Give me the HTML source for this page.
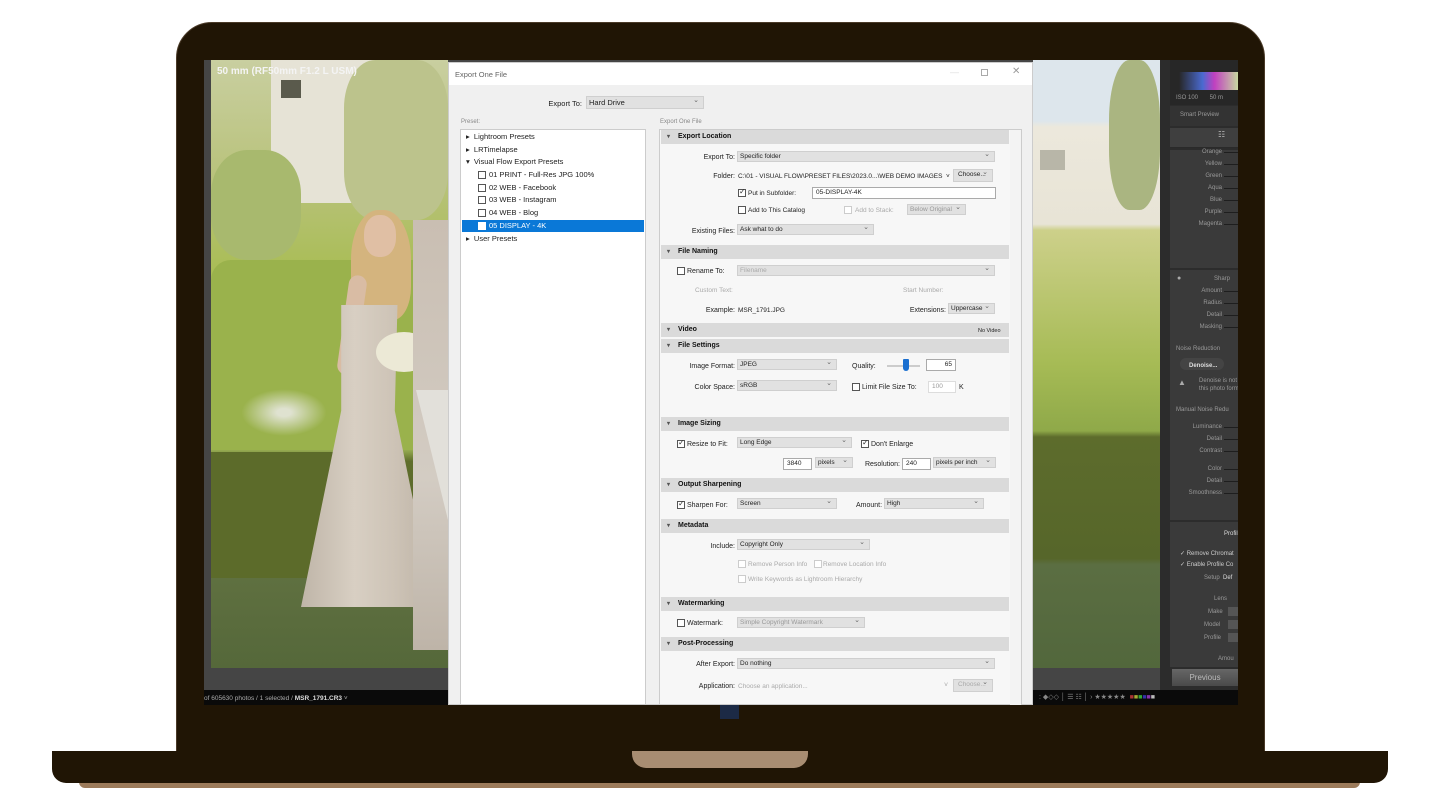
<!DOCTYPE html>
<html><head><meta charset="utf-8">
<style>
*{margin:0;padding:0;box-sizing:border-box}
body{width:1440px;height:810px;background:#fff;position:relative;overflow:hidden;font-family:"Liberation Sans",Arial,sans-serif}
.a{position:absolute}
.lid{left:176px;top:22px;width:1089px;height:740px;background:#201505;border-radius:36px 36px 0 0;border:1px solid #4a3a28}
.base{left:52px;top:751px;width:1336px;height:32px;background:#201505;border-radius:0 0 14px 14px}
.shadow{left:79px;top:780px;width:1281px;height:8px;background:#9c7b5b;border-radius:0 0 6px 6px}
.notch{left:632px;top:751px;width:176px;height:17px;background:#a88d72;border-radius:0 0 14px 14px}
.screen{left:204px;top:60px;width:1034px;height:645px;background:#454545;overflow:hidden}
.t{position:absolute;font-size:7px;color:#222;white-space:nowrap;line-height:9px}
.lbl{position:absolute;font-size:7px;color:#222;white-space:nowrap;text-align:right;line-height:9px}
.dd{position:absolute;height:11px;background:#e1e1e1;border:1px solid #cfcfcf;font-size:6.5px;line-height:9px;padding-left:2px;color:#222}
.dd:after{content:"⌄";position:absolute;right:4px;top:-2px;font-size:7px;color:#666}
.in{position:absolute;height:12px;background:#fff;border:1px solid #aaa;font-size:6.5px;line-height:10px;padding-left:3px;color:#222}
.cb{position:absolute;width:8px;height:8px;border:1px solid #555;background:#fff}
.ck:after{content:"✓";position:absolute;left:0;top:-3px;font-size:8px;color:#333}
.hd{position:absolute;left:661px;width:348px;height:14px;background:#dadada;font-size:7px;font-weight:bold;line-height:14px;padding-left:17px;color:#111}
.hd:before{content:"▾";position:absolute;left:6px;font-size:6px;color:#555}
.dis{color:#aaa}
.lr{position:absolute;font-size:6px;color:#999;white-space:nowrap;text-align:right;line-height:8px}
.sl{position:absolute;left:1020px;width:14px;height:1px;background:#1e1e1e}
</style></head><body>
<div class="a lid"></div>
<div class="a shadow"></div>
<div class="a base"></div>
<div class="a notch"></div>

<div class="a screen">
  <!-- left photo -->
  <div class="a" style="left:7px;top:0;width:237px;height:608px;background:linear-gradient(#c9cfa0 0%,#b8c27a 20%,#a9bd55 35%,#8ba33f 50%,#9ab054 64%,#5f6e2c 66%,#56652a 84%,#5f7040 85%,#55683a 100%)"></div>
  <div class="a" style="left:67px;top:0;width:110px;height:143px;background:#e6e3d6"></div>
  <div class="a" style="left:77px;top:20px;width:20px;height:18px;background:#5a5a4c"></div>
  <div class="a" style="left:7px;top:90px;width:90px;height:110px;background:#a8b96e;border-radius:40%"></div>
  <div class="a" style="left:140px;top:0;width:104px;height:160px;background:#bcc38c;border-radius:30%"></div>
  <div class="a" style="left:7px;top:200px;width:237px;height:190px;background:#9ab24c;border-radius:20px 20px 0 0"></div>
  <div class="a" style="left:7px;top:392px;width:150px;height:126px;background:#5c6b2a"></div>
  <div class="a" style="left:30px;top:325px;width:100px;height:55px;background:radial-gradient(#dfe2d0 10%,transparent 60%)"></div>
  <!-- woman -->
  <div class="a" style="left:147px;top:150px;width:60px;height:110px;background:#d4b47e;border-radius:45% 45% 30% 30%"></div>
  <div class="a" style="left:160px;top:155px;width:32px;height:42px;background:#e0bfa4;border-radius:45%"></div>
  <div class="a" style="left:139px;top:215px;width:18px;height:100px;background:#d9bca4;border-radius:10px;transform:rotate(8deg)"></div>
  <div class="a" style="left:97px;top:245px;width:134px;height:302px;background:linear-gradient(90deg,#bfb5a8,#d8cfc3 40%,#cdc3b6 70%,#bcb2a5);clip-path:polygon(30% 0,72% 0,70% 35%,100% 100%,0 100%,30% 35%)"></div>
  <div class="a" style="left:172px;top:272px;width:56px;height:40px;background:#ece9d6;border-radius:50%"></div>
  <div class="a" style="left:209px;top:160px;width:35px;height:430px;background:linear-gradient(#c9beb2,#d3ccc3 60%,#beb4a8)"></div>
  <div class="a" style="left:212px;top:330px;width:32px;height:130px;background:#e2e0da;clip-path:polygon(0 0,100% 0,100% 100%)"></div>
  <div class="t" style="left:13px;top:6px;color:#f4f4f4;font-size:10px;font-weight:bold;line-height:12px">50 mm (RF50mm F1.2 L USM)</div>

  <!-- right photo -->
  <div class="a" style="left:829px;top:0;width:127px;height:608px;background:linear-gradient(#dde6ec 0%,#dde6ec 10%,#ece8dc 11%,#e8e4d6 27%,#cdd08a 28%,#a6bb55 50%,#8fa949 61%,#5d6c2c 62%,#56662a 82%,#5b6e42 83%,#52673c 100%)"></div>
  <div class="a" style="left:905px;top:0;width:51px;height:150px;background:#aab581;border-radius:40%"></div>
  <div class="a" style="left:836px;top:90px;width:25px;height:20px;background:#b8b6a8"></div>

  <!-- lightroom right panel -->
  <div class="a" style="left:956px;top:0;width:78px;height:645px;background:#2c2c2c"></div>
  <div class="a" style="left:966px;top:0;width:68px;height:45px;background:#272727"></div>
  <div class="a" style="left:975px;top:12px;width:59px;height:18px;background:linear-gradient(90deg,transparent,#4a6ad0 40%,#c040c0 60%,#c8d8a0)"></div>
  <div class="a" style="left:966px;top:46px;width:68px;height:20px;background:#333"></div>
  <div class="a" style="left:966px;top:68px;width:68px;height:20px;background:#3f3f3f;border-bottom:1px solid #2a2a2a"></div>
  <div class="t" style="left:1014px;top:70px;color:#bbb;font-size:8px">☷</div>
  <div class="a" style="left:966px;top:90px;width:68px;height:118px;background:#3a3a3a"></div>
  <div class="a" style="left:966px;top:210px;width:68px;height:250px;background:#3a3a3a"></div>
  <div class="a" style="left:966px;top:462px;width:68px;height:145px;background:#3a3a3a"></div>
  <div class="lr" style="left:972px;top:34px">ISO 100 &nbsp; &nbsp; &nbsp; 50 m</div>
  <div class="lr" style="left:976px;top:51px">Smart Preview</div>
  <div class="lr" style="left:956px;top:88px;width:62px">Orange</div><div class="sl" style="top:92px"></div>
  <div class="lr" style="left:956px;top:100px;width:62px">Yellow</div><div class="sl" style="top:104px"></div>
  <div class="lr" style="left:956px;top:112px;width:62px">Green</div><div class="sl" style="top:116px"></div>
  <div class="lr" style="left:956px;top:124px;width:62px">Aqua</div><div class="sl" style="top:128px"></div>
  <div class="lr" style="left:956px;top:136px;width:62px">Blue</div><div class="sl" style="top:140px"></div>
  <div class="lr" style="left:956px;top:148px;width:62px">Purple</div><div class="sl" style="top:152px"></div>
  <div class="lr" style="left:956px;top:160px;width:62px">Magenta</div><div class="sl" style="top:164px"></div>
  <div class="lr" style="left:1010px;top:215px">Sharp</div>
  <div class="t" style="left:973px;top:214px;color:#aaa;font-size:7px">●</div>
  <div class="lr" style="left:956px;top:227px;width:62px">Amount</div><div class="sl" style="top:231px"></div>
  <div class="lr" style="left:956px;top:239px;width:62px">Radius</div><div class="sl" style="top:243px"></div>
  <div class="lr" style="left:956px;top:251px;width:62px">Detail</div><div class="sl" style="top:255px"></div>
  <div class="lr" style="left:956px;top:263px;width:62px">Masking</div><div class="sl" style="top:267px"></div>
  <div class="lr" style="left:972px;top:285px">Noise Reduction</div>
  <div class="a" style="left:976px;top:298px;width:44px;height:12px;background:#444;border-radius:6px"></div>
  <div class="lr" style="left:985px;top:302px;color:#ddd;font-weight:bold">Denoise...</div>
  <div class="t" style="left:974px;top:318px;color:#aaa;font-size:8px">▲</div>
  <div class="lr" style="left:995px;top:317px">Denoise is not</div>
  <div class="lr" style="left:995px;top:325px">this photo form</div>
  <div class="lr" style="left:972px;top:346px">Manual Noise Redu</div>
  <div class="lr" style="left:956px;top:363px;width:62px">Luminance</div><div class="sl" style="top:367px"></div>
  <div class="lr" style="left:956px;top:375px;width:62px">Detail</div><div class="sl" style="top:379px"></div>
  <div class="lr" style="left:956px;top:387px;width:62px">Contrast</div><div class="sl" style="top:391px"></div>
  <div class="lr" style="left:956px;top:405px;width:62px">Color</div><div class="sl" style="top:409px"></div>
  <div class="lr" style="left:956px;top:417px;width:62px">Detail</div><div class="sl" style="top:421px"></div>
  <div class="lr" style="left:956px;top:429px;width:62px">Smoothness</div><div class="sl" style="top:433px"></div>
  <div class="lr" style="left:1020px;top:470px;color:#ddd">Profil</div>
  <div class="lr" style="left:976px;top:490px;color:#ccc">✓ Remove Chromat</div>
  <div class="lr" style="left:976px;top:501px;color:#ccc">✓ Enable Profile Co</div>
  <div class="lr" style="left:1000px;top:514px">Setup &nbsp;<span style="color:#ddd">Def</span></div>
  <div class="lr" style="left:1010px;top:535px">Lens</div>
  <div class="lr" style="left:1004px;top:548px">Make</div><div class="a" style="left:1024px;top:547px;width:10px;height:9px;background:#555"></div>
  <div class="lr" style="left:1000px;top:561px">Model</div><div class="a" style="left:1024px;top:560px;width:10px;height:9px;background:#555"></div>
  <div class="lr" style="left:1000px;top:574px">Profile</div><div class="a" style="left:1024px;top:573px;width:10px;height:9px;background:#555"></div>
  <div class="lr" style="left:1014px;top:595px">Amou</div>
  <div class="a" style="left:968px;top:609px;width:66px;height:17px;background:linear-gradient(#666,#4a4a4a);color:#bbb;font-size:8px;text-align:center;line-height:17px">Previous</div>

  <!-- status bar -->
  <div class="a" style="left:0;top:630px;width:1034px;height:15px;background:#0a0a0a"></div>
  <div class="t" style="left:0;top:634px;color:#aaa;font-size:6.5px">of 605630 photos / 1 selected / <b style="color:#ddd">MSR_1791.CR3</b> ˅</div>
  <div class="t" style="left:835px;top:633px;color:#888;font-size:7px">: ◆◇◇ │ ☰ ☷ │ › ★★★★★ &nbsp;<span style="color:#a33">■</span><span style="color:#aa3">■</span><span style="color:#3a3">■</span><span style="color:#33a">■</span><span style="color:#83a">■</span><span style="color:#bbb">■</span></div>
</div>

<!-- dialog -->
<div class="a" style="left:448px;top:62px;width:585px;height:643px;background:#f0f0f0;border:1px solid #ccc"></div>
<div class="a" style="left:449px;top:63px;width:583px;height:22px;background:#fff"></div>
<div class="t" style="left:455px;top:70px;color:#666;font-size:7.5px">Export One File</div>
<div class="t" style="left:950px;top:68px;color:#ddd;font-size:9px">—</div>
<div class="a" style="left:981px;top:69px;width:7px;height:7px;border:1px solid #aaa"></div>
<div class="t" style="left:1012px;top:67px;color:#999;font-size:10px">✕</div>

<div class="lbl" style="left:500px;top:99px;width:82px;font-size:7.5px">Export To:</div>
<div class="dd" style="left:586px;top:96px;width:118px;height:13px;font-size:7.5px;line-height:11px">Hard Drive</div>
<div class="t" style="left:461px;top:118px;color:#888;font-size:6px">Preset:</div>
<div class="t" style="left:660px;top:118px;color:#888;font-size:6px">Export One File</div>

<div class="a" style="left:460px;top:129px;width:186px;height:576px;background:#fff;border:1px solid #ccc"></div>
<div class="t" style="left:466px;top:132px;font-size:7.5px;line-height:10px">▸ &nbsp;Lightroom Presets</div>
<div class="t" style="left:466px;top:145px;font-size:7.5px;line-height:10px">▸ &nbsp;LRTimelapse</div>
<div class="t" style="left:466px;top:157px;font-size:7.5px;line-height:10px">▾ &nbsp;Visual Flow Export Presets</div>
<div class="cb" style="left:478px;top:171px"></div><div class="t" style="left:489px;top:170px;font-size:7.5px;line-height:10px">01 PRINT - Full-Res JPG 100%</div>
<div class="cb" style="left:478px;top:184px"></div><div class="t" style="left:489px;top:183px;font-size:7.5px;line-height:10px">02 WEB - Facebook</div>
<div class="cb" style="left:478px;top:196px"></div><div class="t" style="left:489px;top:195px;font-size:7.5px;line-height:10px">03 WEB - Instagram</div>
<div class="cb" style="left:478px;top:209px"></div><div class="t" style="left:489px;top:208px;font-size:7.5px;line-height:10px">04 WEB - Blog</div>
<div class="a" style="left:462px;top:220px;width:182px;height:12px;background:#0a78d7"></div>
<div class="cb" style="left:478px;top:222px;border-color:#fff"></div><div class="t" style="left:489px;top:221px;font-size:7.5px;line-height:10px;color:#fff">05 DISPLAY - 4K</div>
<div class="t" style="left:466px;top:234px;font-size:7.5px;line-height:10px">▸ &nbsp;User Presets</div>

<div class="a" style="left:659px;top:129px;width:363px;height:576px;background:#f7f7f7;border:1px solid #ccc"></div>
<div class="a" style="left:1010px;top:130px;width:11px;height:575px;background:#f3f3f3"></div>

<div class="hd" style="top:130px">Export Location</div>
<div class="lbl" style="left:660px;top:153px;width:75px">Export To:</div><div class="dd" style="left:737px;top:151px;width:258px">Specific folder</div>
<div class="lbl" style="left:660px;top:172px;width:75px">Folder:</div><div class="t" style="left:738px;top:172px;font-size:6.5px">C:\01 - VISUAL FLOW\PRESET FILES\2023.0...\WEB DEMO IMAGES &nbsp;˅</div>
<div class="dd" style="left:953px;top:169px;width:40px;height:13px;padding-left:4px">Choose...</div>
<div class="cb ck" style="left:738px;top:189px"></div><div class="t" style="left:748px;top:189px;font-size:6.5px">Put in Subfolder:</div>
<div class="in" style="left:812px;top:187px;width:184px">05-DISPLAY-4K</div>
<div class="cb" style="left:738px;top:206px"></div><div class="t" style="left:748px;top:206px;font-size:6.5px">Add to This Catalog</div>
<div class="cb" style="left:844px;top:206px;border-color:#ccc"></div><div class="t dis" style="left:855px;top:206px;font-size:6.5px">Add to Stack:</div>
<div class="dd dis" style="left:907px;top:204px;width:59px;color:#999">Below Original</div>
<div class="lbl" style="left:660px;top:227px;width:75px">Existing Files:</div><div class="dd" style="left:737px;top:224px;width:137px">Ask what to do</div>

<div class="hd" style="top:245px">File Naming</div>
<div class="cb" style="left:677px;top:267px"></div><div class="t" style="left:687px;top:267px">Rename To:</div>
<div class="dd dis" style="left:737px;top:265px;width:258px;color:#aaa">Filename</div>
<div class="t dis" style="left:695px;top:286px;font-size:6.5px">Custom Text:</div>
<div class="t dis" style="left:903px;top:286px;font-size:6.5px">Start Number:</div>
<div class="lbl" style="left:660px;top:306px;width:75px">Example:</div><div class="t" style="left:738px;top:306px;font-size:6.5px">MSR_1791.JPG</div>
<div class="lbl" style="left:880px;top:306px;width:66px">Extensions:</div><div class="dd" style="left:948px;top:303px;width:47px">Uppercase</div>

<div class="hd" style="top:323px;height:14px">Video</div>
<div class="t" style="left:978px;top:327px;font-size:5.5px">No Video</div>
<div class="hd" style="top:339px">File Settings</div>
<div class="lbl" style="left:660px;top:362px;width:75px">Image Format:</div><div class="dd" style="left:737px;top:359px;width:100px">JPEG</div>
<div class="t" style="left:852px;top:362px">Quality:</div>
<div class="a" style="left:887px;top:365px;width:33px;height:2px;background:#ccc"></div>
<div class="a" style="left:903px;top:359px;width:6px;height:12px;background:#1a6fd0;border-radius:1px 1px 3px 3px"></div>
<div class="in" style="left:926px;top:359px;width:30px;text-align:right;padding-right:3px">65</div>
<div class="lbl" style="left:660px;top:383px;width:75px">Color Space:</div><div class="dd" style="left:737px;top:380px;width:100px">sRGB</div>
<div class="cb" style="left:852px;top:383px"></div><div class="t" style="left:862px;top:383px">Limit File Size To:</div>
<div class="in dis" style="left:928px;top:381px;width:28px;color:#999;border-color:#ddd">100</div><div class="t" style="left:959px;top:383px">K</div>

<div class="hd" style="top:417px">Image Sizing</div>
<div class="cb ck" style="left:677px;top:440px"></div><div class="t" style="left:687px;top:440px">Resize to Fit:</div>
<div class="dd" style="left:737px;top:437px;width:115px">Long Edge</div>
<div class="cb ck" style="left:861px;top:440px"></div><div class="t" style="left:871px;top:440px">Don't Enlarge</div>
<div class="in" style="left:783px;top:458px;width:29px">3840</div>
<div class="dd" style="left:815px;top:457px;width:38px">pixels</div>
<div class="lbl" style="left:840px;top:460px;width:60px">Resolution:</div>
<div class="in" style="left:902px;top:458px;width:29px">240</div>
<div class="dd" style="left:933px;top:457px;width:63px">pixels per inch</div>

<div class="hd" style="top:478px">Output Sharpening</div>
<div class="cb ck" style="left:677px;top:501px"></div><div class="t" style="left:687px;top:501px">Sharpen For:</div>
<div class="dd" style="left:737px;top:498px;width:100px">Screen</div>
<div class="t" style="left:856px;top:501px">Amount:</div>
<div class="dd" style="left:884px;top:498px;width:100px">High</div>

<div class="hd" style="top:519px">Metadata</div>
<div class="lbl" style="left:660px;top:542px;width:75px">Include:</div><div class="dd" style="left:737px;top:539px;width:133px">Copyright Only</div>
<div class="cb" style="left:738px;top:560px;border-color:#ccc"></div><div class="t dis" style="left:748px;top:560px;font-size:6.5px">Remove Person Info</div>
<div class="cb" style="left:814px;top:560px;border-color:#ccc"></div><div class="t dis" style="left:823px;top:560px;font-size:6.5px">Remove Location Info</div>
<div class="cb" style="left:738px;top:575px;border-color:#ccc"></div><div class="t dis" style="left:748px;top:575px;font-size:6.5px">Write Keywords as Lightroom Hierarchy</div>

<div class="hd" style="top:597px">Watermarking</div>
<div class="cb" style="left:677px;top:619px"></div><div class="t" style="left:687px;top:619px">Watermark:</div>
<div class="dd dis" style="left:737px;top:617px;width:128px;color:#999">Simple Copyright Watermark</div>

<div class="hd" style="top:637px">Post-Processing</div>
<div class="lbl" style="left:660px;top:660px;width:75px">After Export:</div><div class="dd" style="left:737px;top:658px;width:258px">Do nothing</div>
<div class="lbl" style="left:660px;top:682px;width:75px">Application:</div><div class="t dis" style="left:738px;top:682px;font-size:6.5px">Choose an application...</div>
<div class="t dis" style="left:944px;top:681px">˅</div>
<div class="dd dis" style="left:953px;top:679px;width:40px;height:13px;padding-left:4px;color:#aaa">Choose...</div>

<!-- screen bottom edge covers -->
<div class="a" style="left:204px;top:705px;width:1034px;height:46px;background:#201505"></div>
<div class="a" style="left:720px;top:705px;width:19px;height:14px;background:#1c2a45"></div>
</body></html>
